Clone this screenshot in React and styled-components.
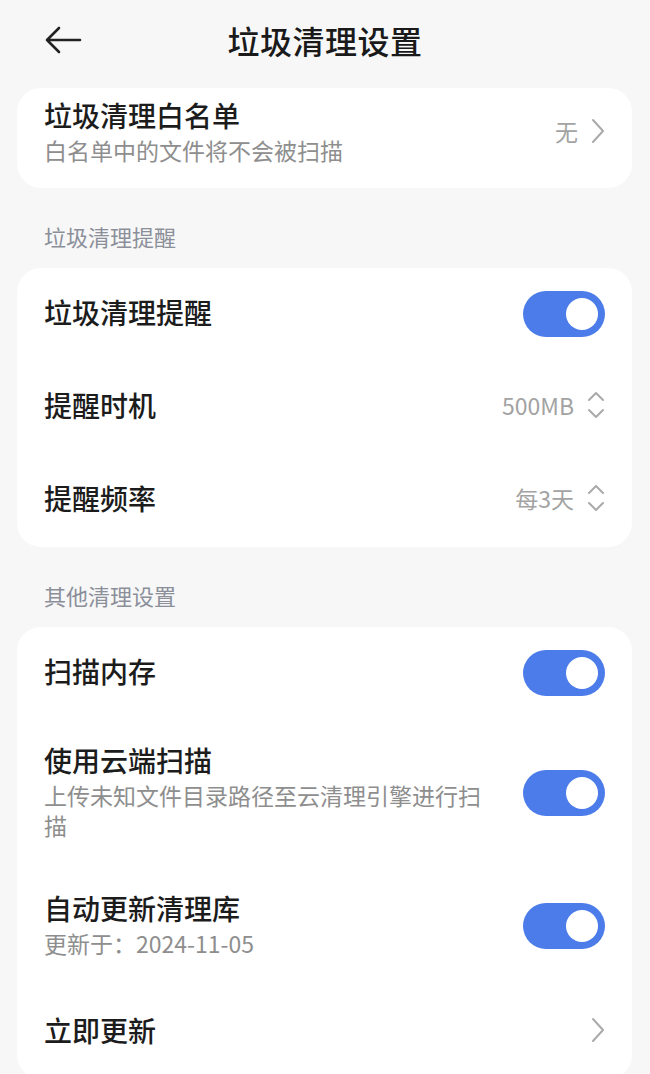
import styled, { createGlobalStyle } from 'styled-components'

const GlobalStyle = createGlobalStyle`
  body {
    margin: 0;
    background: #f7f7f7;
    font-family: "Noto Sans CJK SC", "Noto Sans", sans-serif;
    -webkit-font-smoothing: antialiased;
  }
`

const BackArrow = () => (
  <svg width="38" height="28" viewBox="0 0 38 28" fill="none">
    <path d="M36 14H3M15 2L3 14L15 26" stroke="#222" strokeWidth="2.6" strokeLinecap="round" strokeLinejoin="round" />
  </svg>
)

const ChevronRight = () => (
  <svg width="14" height="26" viewBox="0 0 14 26" fill="none">
    <path d="M2 2L12 13L2 24" stroke="#aaa" strokeWidth="2" strokeLinecap="round" strokeLinejoin="round" />
  </svg>
)

const UpDown = () => (
  <svg width="18" height="30" viewBox="0 0 18 30" fill="none">
    <path d="M2 10L9 3L16 10M2 20L9 27L16 20" stroke="#aaa" strokeWidth="2" strokeLinecap="round" strokeLinejoin="round" />
  </svg>
)

const App = () => {
  return (
    <Page>
      <GlobalStyle />
      <Header>
        <Back>
          <BackArrow />
        </Back>
        <Title>垃圾清理设置</Title>
        <span />
      </Header>

      <Card>
        <Row $compact>
          <Texts>
            <RowTitle>垃圾清理白名单</RowTitle>
            <RowDesc>白名单中的文件将不会被扫描</RowDesc>
          </Texts>
          <Value>
            无<ChevronRight />
          </Value>
        </Row>
      </Card>

      <SectionLabel>垃圾清理提醒</SectionLabel>
      <Card>
        <Row>
          <RowTitle>垃圾清理提醒</RowTitle>
          <Switch $on />
        </Row>
        <Row>
          <RowTitle>提醒时机</RowTitle>
          <Value>
            500MB<UpDown />
          </Value>
        </Row>
        <Row>
          <RowTitle>提醒频率</RowTitle>
          <Value>
            每3天<UpDown />
          </Value>
        </Row>
      </Card>

      <SectionLabel>其他清理设置</SectionLabel>
      <Card>
        <Row>
          <RowTitle>扫描内存</RowTitle>
          <Switch $on />
        </Row>
        <Row>
          <Texts>
            <RowTitle>使用云端扫描</RowTitle>
            <RowDesc>上传未知文件目录路径至云清理引擎进行扫描</RowDesc>
          </Texts>
          <Switch $on />
        </Row>
        <Row>
          <Texts>
            <RowTitle>自动更新清理库</RowTitle>
            <RowDesc>更新于：2024-11-05</RowDesc>
          </Texts>
          <Switch $on />
        </Row>
        <Row>
          <RowTitle>立即更新</RowTitle>
          <Value>
            <ChevronRight />
          </Value>
        </Row>
      </Card>
    </Page>
  )
}

export default App

const Page = styled.div`
  display: flex;
  flex-direction: column;
  min-height: 1074px;
  padding: 0 18px 0 17px;
  box-sizing: border-box;
`

const Header = styled.header`
  display: grid;
  grid-template-columns: 1fr auto 1fr;
  align-items: center;
  height: 80px;
  margin: 0 -18px 8px -17px;
  padding: 0 44px;
`

const Back = styled.div`
  display: flex;
  align-items: center;
`

const Title = styled.h1`
  margin: 0;
  font-size: 32px;
  font-weight: 500;
  color: #1a1a1a;
  letter-spacing: 0.5px;
`

const Card = styled.section`
  background: #fff;
  border-radius: 24px;
  overflow: hidden;
`

const Row = styled.div`
  display: flex;
  align-items: center;
  justify-content: space-between;
  gap: 28px;
  box-sizing: border-box;
  padding: ${p => (p.$compact ? '9px 27px 23px' : '22px 27px 28px')};
  min-height: ${p => (p.$compact ? '0' : '93px')};
`

const Texts = styled.div`
  display: flex;
  flex-direction: column;
  flex: 1;
  min-width: 0;
`

const RowTitle = styled.div`
  font-size: 28px;
  line-height: 36px;
  font-weight: 500;
  color: #1c1c1c;
`

const RowDesc = styled.div`
  margin-top: 2px;
  font-size: 23px;
  line-height: 30px;
  color: #8e8e8e;
`

const Value = styled.div`
  display: flex;
  align-items: center;
  gap: 13px;
  font-size: 23px;
  color: #a3a3a3;
  flex-shrink: 0;
`

const Switch = styled.div`
  position: relative;
  flex-shrink: 0;
  width: 82px;
  height: 46px;
  border-radius: 23px;
  margin-bottom: -4px;
  background: ${p => (p.$on ? '#4b7ce9' : '#e3e3e3')};

  &::after {
    content: '';
    position: absolute;
    top: 7px;
    ${p => (p.$on ? 'right: 7px;' : 'left: 7px;')}
    width: 32px;
    height: 32px;
    border-radius: 50%;
    background: #fff;
  }
`

const SectionLabel = styled.div`
  padding: 0 27px;
  margin: 33px 0 17px;
  font-size: 22px;
  line-height: 30px;
  color: #8b8f9a;
`
